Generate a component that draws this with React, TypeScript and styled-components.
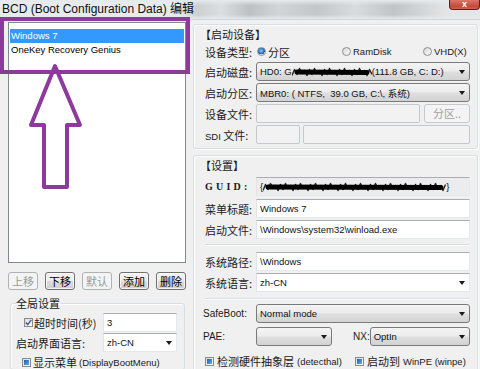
import React from "react";
import styled, { createGlobalStyle } from "styled-components";

const LATIN = `"Liberation Sans", "Noto Sans CJK SC", sans-serif`;
const CJK = `"Noto Sans CJK SC", "Liberation Sans", sans-serif`;
const PURPLE = "#8d3a9c";

const GlobalStyle = createGlobalStyle`
  * { box-sizing: border-box; }
  html, body { margin: 0; padding: 0; overflow: hidden; background: #f0f0f0; }
`;

const Window = styled.div`
  position: relative;
  width: 480px;
  height: 369px;
  overflow: hidden;
  display: flex;
  flex-direction: column;
  background: #f0f0f0;
  color: #1a1a1a;
  font-family: ${CJK};
`;

const TitleBar = styled.div`
  flex: none;
  height: 20px;
  display: flex;
  align-items: flex-start;
  border-bottom: 1px solid #cfd5da;
  background:
    linear-gradient(to bottom, #e7eaec 0%, rgba(231, 234, 236, 0) 28%, rgba(231, 234, 236, 0) 78%, #e7eaec 100%),
    linear-gradient(to right, #e8ebec 0%, #e8ebec 37%, #cdd0d3 41%, #dcdfe1 46%, #bdc1c4 52%, #d2d5d7 58%, #c3c7ca 66%, #d9dcde 74%, #c1c5c8 82%, #d3d6d8 88%, #e3e5e7 93%, #e3e5e7 100%);
`;

const TitleText = styled.div`
  padding-left: 2px;
  font: 12px/18px ${LATIN};
  color: #101010;
  white-space: nowrap;
`;

const CloseButton = styled.div`
  margin-left: auto;
  width: 31px;
  height: 10px;
  border: 1px solid #5e2018;
  border-top: none;
  border-radius: 0 0 4px 4px;
  background: linear-gradient(#d8796a, #c24a38 70%, #d26352);
  color: #fff;
  font: bold 9px/8px ${LATIN};
  text-align: center;
`;

const Body = styled.div`
  flex: 1;
  min-height: 0;
  display: flex;
  gap: 7px;
  padding: 2px 2px 0 8px;
`;

const LeftColumn = styled.div`
  width: 178px;
  flex: none;
  display: flex;
  flex-direction: column;
`;

const ListBox = styled.div`
  height: 241px;
  flex: none;
  border: 1px solid #828790;
  background: #fff;
  padding: 6px 1px 0;
`;

const ListItem = styled.div<{ $selected?: boolean }>`
  height: 14px;
  padding-left: 1px;
  font: 9.5px/14px ${LATIN};
  color: ${(p) => (p.$selected ? "#fff" : "#000")};
  background: ${(p) => (p.$selected ? "#3399ff" : "transparent")};
  white-space: nowrap;
`;

const ButtonRow = styled.div`
  margin-top: 9px;
  height: 18px;
  flex: none;
  display: flex;
  justify-content: space-between;
`;

const PushButton = styled.button`
  width: 30px;
  height: 18px;
  padding: 0;
  border: 1px solid #707070;
  border-radius: 3px;
  background: linear-gradient(#f2f2f2 0%, #ebebeb 48%, #dddddd 52%, #cfcfcf 100%);
  box-shadow: inset 0 0 0 1px rgba(255, 255, 255, 0.7);
  font: 11px/16px ${CJK};
  color: #000;

  &:disabled {
    border-color: #adb2b5;
    background: #f4f4f4;
    color: #9a9a9a;
    box-shadow: none;
  }
`;

const GlobalGroup = styled.fieldset`
  margin: 6px 1px 0 2px;
  padding: 3px 7px 0 5px;
  border: 1px solid #d5dfe5;
  border-radius: 3px;
  box-shadow: inset 1px 1px 0 #fff;
  min-width: 0;
  flex: 1;
`;

const Legend = styled.legend`
  padding: 0;
  font: 11px/14px ${CJK};
`;

const GlobalRow = styled.div<{ $mt?: number; $h?: number }>`
  display: grid;
  grid-template-columns: 87px 74px;
  align-items: center;
  height: ${(p) => p.$h ?? 19}px;
  margin-top: ${(p) => p.$mt ?? 0}px;
`;

const RightColumn = styled.div`
  flex: 1;
  min-width: 0;
  display: flex;
  flex-direction: column;
`;

const Group = styled.section<{ $mt: number; $pt: number }>`
  flex: none;
  margin-top: ${(p) => p.$mt}px;
  padding: ${(p) => p.$pt}px 7px 4px 11px;
  border: 1px solid #d5dfe5;
  border-radius: 3px;
  box-shadow: inset 1px 1px 0 #fff, 1px 1px 0 #fff;
  display: flex;
  flex-direction: column;
`;

const GroupTitle = styled.div<{ $h: number }>`
  height: ${(p) => p.$h}px;
  margin-left: -5px;
  font: 11px/${(p) => p.$h}px ${CJK};
  white-space: nowrap;
`;

const FieldRow = styled.div<{ $mt?: number; $h?: number }>`
  flex: none;
  display: grid;
  grid-template-columns: 51px 1fr;
  align-items: center;
  height: ${(p) => p.$h ?? 19}px;
  margin-top: ${(p) => p.$mt ?? 0}px;
`;

const Label = styled.span<{ $latin?: boolean; $shift?: number }>`
  margin-left: ${(p) => p.$shift ?? 0}px;
  font: ${(p) => (p.$latin ? `10px/14px ${LATIN}` : `11px/14px ${CJK}`)};
  white-space: nowrap;
`;

const GuidLabel = styled.span`
  font: bold 10px/14px "Liberation Serif", "DejaVu Serif", serif;
  letter-spacing: 3.2px;
  white-space: nowrap;
`;

const En = styled.span`
  font: 9.5px ${LATIN};
`;

const Controls = styled.div<{ $gap: number }>`
  display: flex;
  align-items: center;
  gap: ${(p) => p.$gap}px;
  min-width: 0;
`;

const TextBox = styled.div<{ $tone?: "normal" | "disabled" | "readonly"; $w?: number }>`
  height: 19px;
  ${(p) => (p.$w ? `width: ${p.$w}px; flex: none;` : "flex: 1; min-width: 0;")}
  display: flex;
  align-items: center;
  padding: 0 3px;
  border: 1px solid;
  border-color: ${(p) =>
    p.$tone === "disabled" ? "#c5c9cc" : "#abadb3 #e3e9ef #e3e9ef #e2e3ea"};
  border-radius: ${(p) => (p.$tone === "disabled" ? 2 : 0)}px;
  background: ${(p) =>
    p.$tone === "disabled" ? "#f2f2f2" : p.$tone === "readonly" ? "#ececec" : "#fff"};
  font: 9.5px ${LATIN};
  color: #111;
  white-space: nowrap;
  overflow: hidden;
`;

const Combo = styled.div<{ $flat?: boolean; $w?: number }>`
  height: 19px;
  ${(p) => (p.$w ? `width: ${p.$w}px; flex: none;` : "flex: 1; min-width: 0;")}
  display: flex;
  align-items: center;
  justify-content: space-between;
  padding: 0 4px 0 3px;
  border: 1px solid;
  border-color: ${(p) => (p.$flat ? "#abadb3 #e3e9ef #e3e9ef #e2e3ea" : "#7a7a7a")};
  border-radius: ${(p) => (p.$flat ? 0 : 3)}px;
  background: ${(p) =>
    p.$flat ? "#fff" : "linear-gradient(#f4f4f4 0%, #ececec 48%, #dfdfdf 52%, #d3d3d3 100%)"};
  font: 9.5px ${LATIN};
  color: #111;
  white-space: nowrap;
  overflow: hidden;
`;

const ComboText = styled.span`
  display: flex;
  align-items: center;
  min-width: 0;
`;

const DropArrow = styled.span`
  flex: none;
  width: 0;
  height: 0;
  margin-left: 4px;
  border-left: 3.5px solid transparent;
  border-right: 3.5px solid transparent;
  border-top: 4px solid #1a1a1a;
`;

const SideButton = styled.div`
  width: 46px;
  height: 19px;
  flex: none;
  border: 1px solid #c5c9cc;
  border-radius: 3px;
  background: #f4f4f4;
  color: #a0a0a0;
  font: 11px/17px ${CJK};
  text-align: center;
`;

const Separator = styled.div<{ $mt: number }>`
  flex: none;
  height: 2px;
  margin-top: ${(p) => p.$mt}px;
  border-top: 1px solid #d5dfe5;
  border-bottom: 1px solid #fff;
`;

const RadioSet = styled.div`
  display: flex;
  align-items: center;
  padding-left: 1px;
`;

const RadioOption = styled.label<{ $w?: number }>`
  ${(p) => (p.$w ? `width: ${p.$w}px; flex: none;` : "")}
  display: flex;
  align-items: center;
  gap: 2px;
  white-space: nowrap;
  font: 11px/14px ${CJK};
`;

const RadioDot = styled.span<{ $on?: boolean }>`
  width: 9px;
  height: 9px;
  flex: none;
  border-radius: 50%;
  border: 1px solid #8e8f8f;
  background: ${(p) =>
    p.$on
      ? "radial-gradient(circle at 45% 40%, #8fd0ff 0, #2b78c8 45%, #1c4f8c 62%, #f3f3f3 66%)"
      : "linear-gradient(135deg, #d6d6d6, #fdfdfd)"};
`;

const CheckRow = styled.div<{ $mt?: number; $h?: number }>`
  flex: none;
  display: flex;
  align-items: center;
  height: ${(p) => p.$h ?? 14}px;
  margin-top: ${(p) => p.$mt ?? 0}px;
`;

const CheckItem = styled.label<{ $w?: number; $indent?: number; $gap?: number }>`
  ${(p) => (p.$w ? `width: ${p.$w}px; flex: none;` : "")}
  margin-left: ${(p) => p.$indent ?? 0}px;
  display: flex;
  align-items: center;
  gap: ${(p) => p.$gap ?? 3}px;
  font: 11px/14px ${CJK};
  white-space: nowrap;
`;

const Box = styled.span<{ $mixed?: boolean }>`
  width: 9px;
  height: 9px;
  flex: none;
  display: flex;
  border: 1px solid #8a8a8a;
  padding: 1px;
  background: linear-gradient(135deg, #d9d9d9, #ffffff);

  &::after {
    content: "";
    flex: 1;
    display: ${(p) => (p.$mixed ? "block" : "none")};
    background: linear-gradient(135deg, #1f5fa9, #64aaea);
  }
`;

const CheckSvg = styled.svg`
  display: block;
  margin: -1px;
`;

const ScribbleSvg = styled.svg`
  display: block;
  flex: none;
`;

const Annotation = styled.div`
  position: absolute;
  left: 0;
  top: 17px;
  width: 190px;
  height: 57px;
  border: 4px solid ${PURPLE};
  pointer-events: none;
`;

const ArrowSvg = styled.svg`
  position: absolute;
  left: 0;
  top: 0;
  pointer-events: none;
`;

const Check: React.FC<{ mixed?: boolean }> = ({ mixed }) => (
  <Box $mixed={mixed}>
    {!mixed && (
      <CheckSvg width="7" height="7" viewBox="0 0 7 7">
        <path d="M0.8 3.6 L2.7 5.6 L6.3 0.9" fill="none" stroke="#3c5f9a" strokeWidth="1.5" />
      </CheckSvg>
    )}
  </Box>
);

const Scribble: React.FC<{ w: number; h?: number }> = ({ w, h = 10 }) => {
  const pts: string[] = [];
  for (let x = 0, i = 0; x <= w; x += 2.5, i++) {
    const y = i % 2 ? 1.5 + ((i * 7) % 3) : h - 1.5 - ((i * 5) % 3);
    pts.push(`${x.toFixed(1)},${y}`);
  }
  return (
    <ScribbleSvg width={w} height={h} viewBox={`0 0 ${w} ${h}`}>
      <polyline points={pts.join(" ")} fill="none" stroke="#222" strokeWidth={1.4} strokeLinejoin="round" />
      <line x1={5} y1={h / 2} x2={w - 5} y2={h / 2 + 0.5} stroke="#000" strokeWidth={h * 0.5} strokeLinecap="round" />
    </ScribbleSvg>
  );
};

export default function App() {
  return (
    <>
      <GlobalStyle />
      <Window>
        <TitleBar>
          <TitleText>BCD (Boot Configuration Data) 编辑</TitleText>
          <CloseButton>x</CloseButton>
        </TitleBar>

        <Body>
          <LeftColumn>
            <ListBox>
              <ListItem $selected>Windows 7</ListItem>
              <ListItem>OneKey Recovery Genius</ListItem>
            </ListBox>

            <ButtonRow>
              <PushButton disabled>上移</PushButton>
              <PushButton>下移</PushButton>
              <PushButton disabled>默认</PushButton>
              <PushButton>添加</PushButton>
              <PushButton>删除</PushButton>
            </ButtonRow>

            <GlobalGroup>
              <Legend>全局设置</Legend>
              <GlobalRow $h={18}>
                <CheckItem $indent={8} $gap={1}>
                  <Check />
                  超时时间(秒)
                </CheckItem>
                <TextBox>3</TextBox>
              </GlobalRow>
              <GlobalRow $mt={2}>
                <Label>启动界面语言:</Label>
                <Combo $flat>
                  <ComboText>zh-CN</ComboText>
                  <DropArrow />
                </Combo>
              </GlobalRow>
              <CheckRow $mt={3}>
                <CheckItem $indent={6} $gap={2}>
                  <Check mixed />
                  显示菜单 <En>(DisplayBootMenu)</En>
                </CheckItem>
              </CheckRow>
            </GlobalGroup>
          </LeftColumn>

          <RightColumn>
            <Group $mt={2} $pt={3}>
              <GroupTitle $h={13}>【启动设备】</GroupTitle>
              <FieldRow $mt={2} $h={17}>
                <Label>设备类型:</Label>
                <RadioSet>
                  <RadioOption $w={85}>
                    <RadioDot $on />
                    分区
                  </RadioOption>
                  <RadioOption $w={81}>
                    <RadioDot />
                    <En>RamDisk</En>
                  </RadioOption>
                  <RadioOption>
                    <RadioDot />
                    <En>VHD(X)</En>
                  </RadioOption>
                </RadioSet>
              </FieldRow>
              <FieldRow $mt={2}>
                <Label>启动磁盘:</Label>
                <Combo>
                  <ComboText>
                    HD0: G
                    <Scribble w={80} />
                    (111.8 GB, C: D:)
                  </ComboText>
                  <DropArrow />
                </Combo>
              </FieldRow>
              <FieldRow $mt={2}>
                <Label>启动分区:</Label>
                <Combo>
                  <ComboText>MBR0: ( NTFS,&nbsp; 39.0 GB, C:\, 系统)</ComboText>
                  <DropArrow />
                </Combo>
              </FieldRow>
              <FieldRow $mt={2}>
                <Label>设备文件:</Label>
                <Controls $gap={4}>
                  <TextBox $tone="disabled" />
                  <SideButton>分区..</SideButton>
                </Controls>
              </FieldRow>
              <FieldRow $mt={2}>
                <Label>
                  <En>SDI</En> 文件:
                </Label>
                <Controls $gap={3}>
                  <TextBox $tone="disabled" $w={44} />
                  <TextBox $tone="disabled" />
                </Controls>
              </FieldRow>
            </Group>

            <Group $mt={6} $pt={2}>
              <GroupTitle $h={14}>【设置】</GroupTitle>
              <FieldRow $mt={5}>
                <GuidLabel>GUID:</GuidLabel>
                <TextBox $tone="readonly">
                  {"{"}
                  <Scribble w={183} />
                  {"}"}
                </TextBox>
              </FieldRow>
              <FieldRow $mt={3}>
                <Label>菜单标题:</Label>
                <TextBox>Windows 7</TextBox>
              </FieldRow>
              <FieldRow $mt={2}>
                <Label>启动文件:</Label>
                <TextBox>\Windows\system32\winload.exe</TextBox>
              </FieldRow>
              <Separator $mt={5} />
              <FieldRow $mt={6}>
                <Label>系统路径:</Label>
                <TextBox>\Windows</TextBox>
              </FieldRow>
              <FieldRow $mt={2}>
                <Label>系统语言:</Label>
                <Combo $flat>
                  <ComboText>zh-CN</ComboText>
                  <DropArrow />
                </Combo>
              </FieldRow>
              <Separator $mt={6} />
              <FieldRow $mt={4}>
                <Label $latin $shift={-2}>SafeBoot:</Label>
                <Combo>
                  <ComboText>Normal mode</ComboText>
                  <DropArrow />
                </Combo>
              </FieldRow>
              <FieldRow $mt={4}>
                <Label $latin $shift={-2}>PAE:</Label>
                <Controls $gap={0}>
                  <Combo $w={76}>
                    <ComboText />
                    <DropArrow />
                  </Combo>
                  <Label $latin $shift={21}>NX:</Label>
                  <Combo>
                    <ComboText>OptIn</ComboText>
                    <DropArrow />
                  </Combo>
                </Controls>
              </FieldRow>
              <CheckRow $mt={8}>
                <CheckItem $w={150}>
                  <Check mixed />
                  检测硬件抽象层<En>(detecthal)</En>
                </CheckItem>
                <CheckItem>
                  <Check mixed />
                  启动到 <En>WinPE (winpe)</En>
                </CheckItem>
              </CheckRow>
            </Group>
          </RightColumn>
        </Body>

        <Annotation />
        <ArrowSvg width="100" height="200" viewBox="0 0 100 200">
          <polygon
            points="55,66 80,125 67,125 67,187 44,187 44,125 31,125"
            fill="none"
            stroke={PURPLE}
            strokeWidth="4"
            strokeLinejoin="round"
          />
        </ArrowSvg>
      </Window>
    </>
  );
}
